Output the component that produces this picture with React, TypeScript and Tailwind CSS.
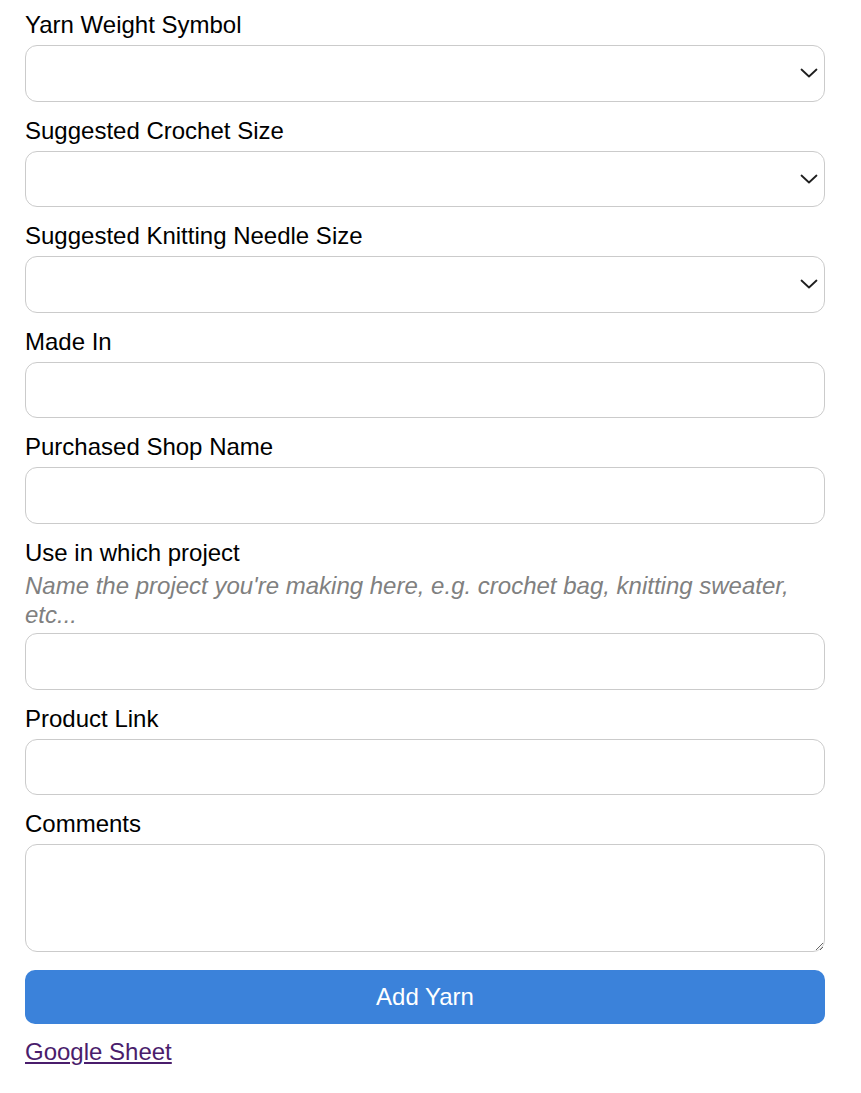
import React from 'react';

const font = { fontFamily: '"Liberation Sans", Arial, sans-serif' };

const Chevron: React.FC = () => (
  <svg
    className="pointer-events-none absolute right-[7px] top-1/2 -translate-y-1/2"
    width="18"
    height="10"
    viewBox="0 0 18 10"
    fill="none"
  >
    <path d="M1.5 1.5 L9 8.5 L16.5 1.5" stroke="#1f1f1f" strokeWidth="1.8" strokeLinecap="round" strokeLinejoin="round" />
  </svg>
);

const Label: React.FC<{ text: string }> = ({ text }) => (
  <label className="block text-[24px] leading-[28px] text-black mb-[6px]">{text}</label>
);

const SelectField: React.FC<{ label: string }> = ({ label }) => (
  <div className="mb-[15px]">
    <Label text={label} />
    <div className="relative">
      <select className="block w-full h-[56.5px] appearance-none rounded-[12px] border border-[#cbcbcb] bg-white px-3 text-[24px] outline-none">
        <option value=""></option>
      </select>
      <Chevron />
    </div>
  </div>
);

const InputField: React.FC<{ label: string; hint?: string }> = ({ label, hint }) => (
  <div className="mb-[15px]">
    <Label text={label} />
    {hint && (
      <p className="-mt-[2px] mb-[4.5px] text-[24px] leading-[29px] italic text-[#808080]">{hint}</p>
    )}
    <input
      type="text"
      className="block w-full h-[56.5px] rounded-[12px] border border-[#cbcbcb] bg-white px-3 text-[24px] outline-none"
    />
  </div>
);

const App: React.FC = () => {
  return (
    <div className="min-h-screen bg-white" style={font}>
      <form className="w-[800px] ml-[25px] pt-[11px]" onSubmit={e => e.preventDefault()}>
        <SelectField label="Yarn Weight Symbol" />
        <SelectField label="Suggested Crochet Size" />
        <SelectField label="Suggested Knitting Needle Size" />
        <InputField label="Made In" />
        <InputField label="Purchased Shop Name" />
        <InputField
          label="Use in which project"
          hint="Name the project you're making here, e.g. crochet bag, knitting sweater, etc..."
        />
        <InputField label="Product Link" />

        {/* Comments */}
        <div className="mb-[18px]">
          <Label text="Comments" />
          <textarea className="block w-full h-[108px] rounded-[12px] border border-[#cbcbcb] bg-white px-3 py-2 text-[24px] outline-none" />
        </div>

        <button
          type="submit"
          className="block w-full h-[54px] rounded-[10px] bg-[#3b82da] text-[24px] text-white"
        >
          Add Yarn
        </button>

        <a href="#" className="mt-[14px] inline-block text-[24px] leading-[28px] text-[#4a1d6c] underline">
          Google Sheet
        </a>
      </form>
    </div>
  );
};

export default App;
